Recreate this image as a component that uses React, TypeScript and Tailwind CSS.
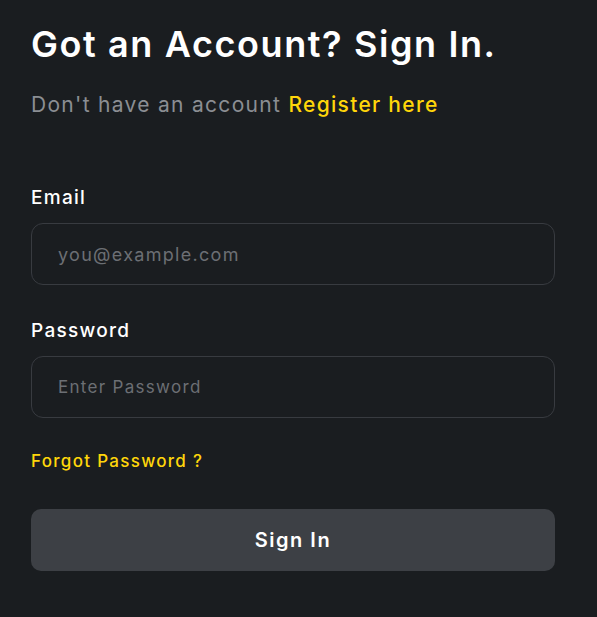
import React from "react";

export default function App() {
  return (
    <div className="min-h-[617px] w-full bg-[#1a1d20] font-['Inter',sans-serif]">
      <div className="w-[524px] ml-[31px] pt-[21px]">
        <h1 className="text-[36px] leading-[46px] font-semibold text-white tracking-[1.6px]">
          Got an Account? Sign In.
        </h1>
        <p className="mt-[24px] text-[21px] leading-[28px] tracking-[1.3px] text-[#8b8e93]">
          Don't have an account{" "}
          <a className="font-medium text-[#ffd60a]">Register here</a>
        </p>

        <form className="mt-[66px]" onSubmit={(e) => e.preventDefault()}>
          <label className="block text-[19px] leading-[26px] font-medium tracking-[1.3px] text-white">
            Email
          </label>
          <input
            type="email"
            placeholder="you@example.com"
            className="mt-[12px] block w-full h-[62px] rounded-[12px] border border-[#383b40] bg-transparent px-[26px] text-[18px] tracking-[1.3px] text-white placeholder:text-[#6c6f74] outline-none"
          />

          <label className="mt-[33px] block text-[19px] leading-[26px] font-medium tracking-[1.3px] text-white">
            Password
          </label>
          <input
            type="password"
            placeholder="Enter Password"
            className="mt-[12px] block w-full h-[62px] rounded-[12px] border border-[#383b40] bg-transparent px-[26px] text-[17px] tracking-[1.3px] text-white placeholder:text-[#6c6f74] outline-none"
          />

          <a className="mt-[31px] block text-[17px] leading-[24px] font-medium tracking-[1.3px] text-[#ffd60a]">
            Forgot Password ?
          </a>

          <button
            type="submit"
            className="mt-[36px] flex w-full h-[62px] items-center justify-center rounded-[10px] bg-[#3d4045] text-[20px] font-semibold tracking-[1.5px] text-white"
          >
            Sign In
          </button>
        </form>
      </div>
    </div>
  );
}
